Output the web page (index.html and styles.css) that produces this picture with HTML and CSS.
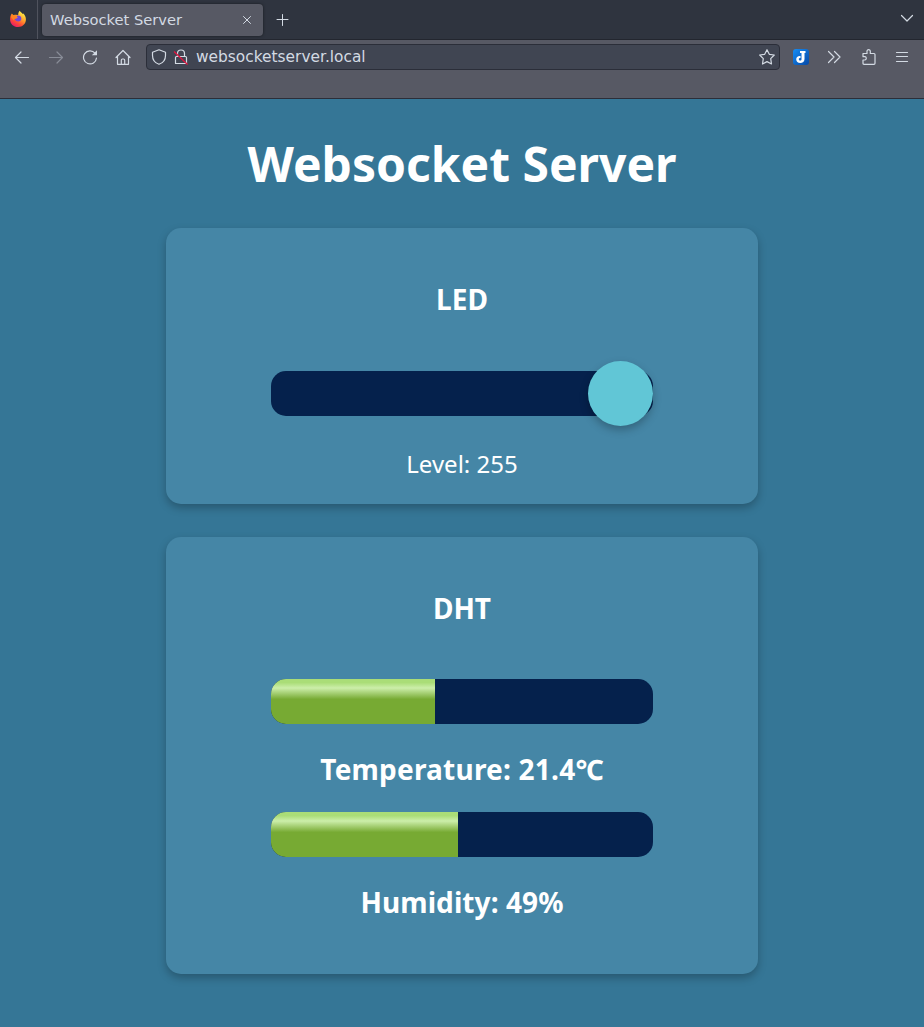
FILE: index.html
```html
<!DOCTYPE html>
<html lang="en">
<head>
<meta charset="utf-8">
<title>Websocket Server</title>
<link rel="stylesheet" href="styles.css">
</head>
<body>
<header class="browser">
  <div class="tabstrip">
    <div class="pinned">
      <svg width="18" height="18" viewBox="0 0 18 18">
        <defs>
          <linearGradient id="flame" x1="0.85" y1="0.05" x2="0.25" y2="1"><stop offset="0.05" stop-color="#fff04a"/><stop offset="0.4" stop-color="#ffa52b"/><stop offset="0.7" stop-color="#ff4c35"/><stop offset="1" stop-color="#e9166e"/></linearGradient>
        </defs>
        <path d="M10.800.8C11.500 2.200 13 2.700 13.600 4L14.300 3.600C16 5.300 16.900 7.300 16.900 9.500C16.900 13.800 13.600 17 9.100 17C4.500 17 1.100 13.700 1.100 9.400C1.100 7 1.700 5 2.900 3.500L3.800 4.900L6.500 4.700L9.200 5C9.100 3.200 9.800 1.700 10.800.8Z" fill="url(#flame)"/>
        <path d="M8.300 5.600C11.300 5.300 12.700 7.200 12.300 9.200C11.800 11.300 9.500 12 7.500 11C6.200 10.400 5.700 9.400 5.700 8.500C6.600 8.900 7.600 8.600 8.200 8C8.900 7.500 8.700 6.800 7.400 6.400Z" fill="#7048d8"/>
        <path d="M3 3.700L4 5.100L7.600 5.300L7.300 6.700L8.300 7.200L6.600 8.500L5.600 8.500L4.700 10.500L2 7Z" fill="#ff8420"/>
      </svg>
    </div>
    <div class="tab">
      <span class="tab-title">Websocket Server</span>
      <svg width="10" height="10" viewBox="0 0 10 10"><path class="line thin" d="M1.500 1.500L8.500 8.500M8.500 1.500L1.500 8.500"/></svg>
    </div>
    <svg class="new-tab" width="14" height="14" viewBox="0 0 14 14"><path class="line thin" d="M7.500 1.500V12.500M2 6.500H13"/></svg>
    <svg class="all-tabs" width="14" height="10" viewBox="0 0 14 10"><path class="line" d="M1.500 1.500L7 7L12.500 1.500"/></svg>
  </div>
  <nav class="toolbar">
    <div class="nav-buttons">
      <svg width="16" height="16" viewBox="0 0 16 16"><path class="line" d="M14.500 8.500H1.500M7 3L1.500 8.500L7 14"/></svg>
      <svg class="disabled" width="16" height="16" viewBox="0 0 16 16"><path class="line" d="M1.500 8.500H14.500M9 3L14.500 8.500L9 14"/></svg>
      <svg width="16" height="16" viewBox="0 0 16 16"><path class="line" d="M13 4.200A6.500 6.500 0 1 0 14.500 9"/><path d="M15 1.200V6.300H9.800Z" fill="#d3dae3"/></svg>
      <svg width="16" height="16" viewBox="0 0 16 16"><path class="line" d="M1 8.500L8 1.500L15 8.500M2.500 7V15.300H13.500V7M6.300 15.300V11.300Q6.300 10 7.500 10H8.500Q9.700 10 9.700 11.300V15.300"/></svg>
    </div>
    <div class="address">
      <svg width="16" height="16" viewBox="0 0 16 16"><path class="line" d="M8 .8L14.500 3.300V6.500C14.500 10.800 12 13.900 8 15.300C4 13.900 1.500 10.800 1.500 6.500V3.300Z"/></svg>
      <svg class="lock" width="16" height="16" viewBox="0 0 16 16"><path class="line" d="M4.500 7.500V4.500A3.500 3.500 0 0 1 11.500 4.500V7.500M3.500 7.500H12.500Q13.500 7.500 13.500 8.500V14.500H2.500V8.500Q2.500 7.500 3.500 7.500Z"/><path d="M1 2.500L14.500 15.500" stroke="#e2143f" stroke-width="1.300"/></svg>
      <span class="url">websocketserver.local</span>
      <svg width="18" height="18" viewBox="0 0 18 18"><path class="line" d="M9 1.700L11.300 6.300L16.300 7L12.700 10.600L13.500 16L9 13.600L4.500 16L5.300 10.600L1.700 7L6.700 6.300Z"/></svg>
    </div>
    <div class="extensions">
      <svg width="16" height="16" viewBox="0 0 16 16"><defs><linearGradient id="blue" x2="1" y2="1"><stop stop-color="#168df4"/><stop offset="1" stop-color="#0749a6"/></linearGradient></defs><rect width="16" height="16" rx="3" fill="url(#blue)"/><path d="M7 2H12.500V4H11.500V10C11.500 12.800 9.700 14 7.300 14C4.800 14 3.200 12.600 3.200 10.300C3.200 8 4.900 6.700 7.500 7V9C6.200 8.900 5.800 9.500 5.800 10.300C5.800 11.200 6.500 11.500 7.200 11.500C8.200 11.500 8.500 11 8.500 10V4H7Z" fill="#fff"/></svg>
      <svg class="more" width="14" height="14" viewBox="0 0 14 14"><path class="line" d="M1.500 1.500L7 7L1.500 12.500M7.500 1.500L13 7L7.500 12.500"/></svg>
      <svg class="puzzle" width="16" height="17" viewBox="0 0 16 17"><path class="line" d="M2 5.500H6V3A1.700 1.700 0 0 1 9.300 3V5.500H13Q14 5.500 14 6.500V15.300Q14 16.300 13 16.300H3Q2 16.300 2 15.300V12H4A1.700 1.700 0 0 0 4 8.700H2Z"/></svg>
      <svg width="14" height="12" viewBox="0 0 14 12"><path class="line" d="M1.500 1.500H12.500M1.500 5.500H12.500M1.500 10.500H12.500"/></svg>
    </div>
  </nav>
</header>
<main class="page">
  <h1 class="heading">Websocket Server</h1>
  <section class="card led">
    <h2 class="card-title">LED</h2>
    <div class="track slider"><span class="thumb"></span></div>
    <p class="level">Level: 255</p>
  </section>
  <section class="card dht">
    <h2 class="card-title">DHT</h2>
    <div class="track"><div class="fill" style="width:42.900%"></div></div>
    <h2 class="reading temperature">Temperature: 21.4℃</h2>
    <div class="track"><div class="fill" style="width:49%"></div></div>
    <h2 class="reading">Humidity: 49%</h2>
  </section>
</main>
</body>
</html>
```
FILE: styles.css
```css
* { box-sizing: border-box; }
body { margin: 0; min-height: 1027px; background: #357696; color: #fff; font-family: "Noto Sans", sans-serif; }
svg { display: block; flex: none; }
h1, h2, p { margin: 0; }
.line { fill: none; stroke: #d3dae3; stroke-width: 1.2; stroke-linecap: round; stroke-linejoin: round; }
.thin { stroke-width: 1; }

.browser { height: 99px; background: #575964; border-bottom: 1px solid #2b2e39; color: #d3dae3; font-family: "DejaVu Sans", sans-serif; }
.tabstrip { display: flex; align-items: center; height: 40px; background: #2f343f; border-bottom: 1px solid #23262f; }
.pinned { width: 38px; height: 39px; padding: 10px 0 0 9px; border-right: 1px solid #50535e; }
.tab { display: flex; align-items: center; justify-content: space-between; width: 221px; height: 32px; margin-left: 4px; padding: 0 11px 0 8px; border-radius: 4px; background: #575964; box-shadow: 0 0 3px rgba(0, 0, 0, .5); }
.tab-title { font-size: 14.67px; line-height: 20px; }
.new-tab { margin-left: 12px; }
.all-tabs { margin: 0 10px 2px auto; }
.toolbar { display: flex; align-items: center; height: 34px; }
.nav-buttons { display: flex; gap: 18px; width: 118px; margin-left: 14px; }
.nav-buttons svg:last-child { margin-left: -1px; }
.disabled { opacity: .4; }
.address { display: flex; align-items: center; width: 634px; height: 26px; margin-left: 14px; padding: 0 3px 0 4px; border: 1px solid #2b2e39; border-radius: 4px; background: #404552; }
.lock { margin-left: 6px; }
.url { flex: 1; margin-left: 7px; font-size: 15.4px; line-height: 22px; }
.extensions { display: flex; align-items: center; justify-content: space-between; width: 116px; margin-left: 13px; }
.more { margin-right: 1px; }
.puzzle { margin-bottom: 1px; }

.page { display: flex; flex-direction: column; align-items: center; padding-top: 32px; }
.heading { margin-bottom: 31px; font-size: 48px; line-height: 66px; }
.card { display: flex; flex-direction: column; align-items: center; width: 592px; padding-top: 51px; border-radius: 15px; background: #4586a6; box-shadow: 0 4px 8px rgba(0, 0, 0, .25); }
.led { height: 276px; }
.dht { height: 437px; margin-top: 33px; }
.card-title, .reading { font-size: 28px; line-height: 40px; }
.card-title { margin-bottom: 52px; }
.dht .card-title { margin-bottom: 51px; }
.track { width: 382px; height: 45px; border-radius: 15px; background: #05214c; overflow: hidden; }
.slider { display: flex; align-items: center; justify-content: flex-end; overflow: visible; }
.thumb { flex: none; width: 65px; height: 65px; border-radius: 50%; background: #61c6d6; box-shadow: 0 4px 8px rgba(0, 0, 0, .25); }
.level { margin-top: 32px; font-size: 24px; line-height: 32px; }
.fill { height: 100%; background: linear-gradient(#ad7, #ad7 8%, #cea 20%, #7a3 45%); }
.reading { margin: 25px 0 23px; letter-spacing: .08px; }
.temperature { letter-spacing: .22px; }
```
